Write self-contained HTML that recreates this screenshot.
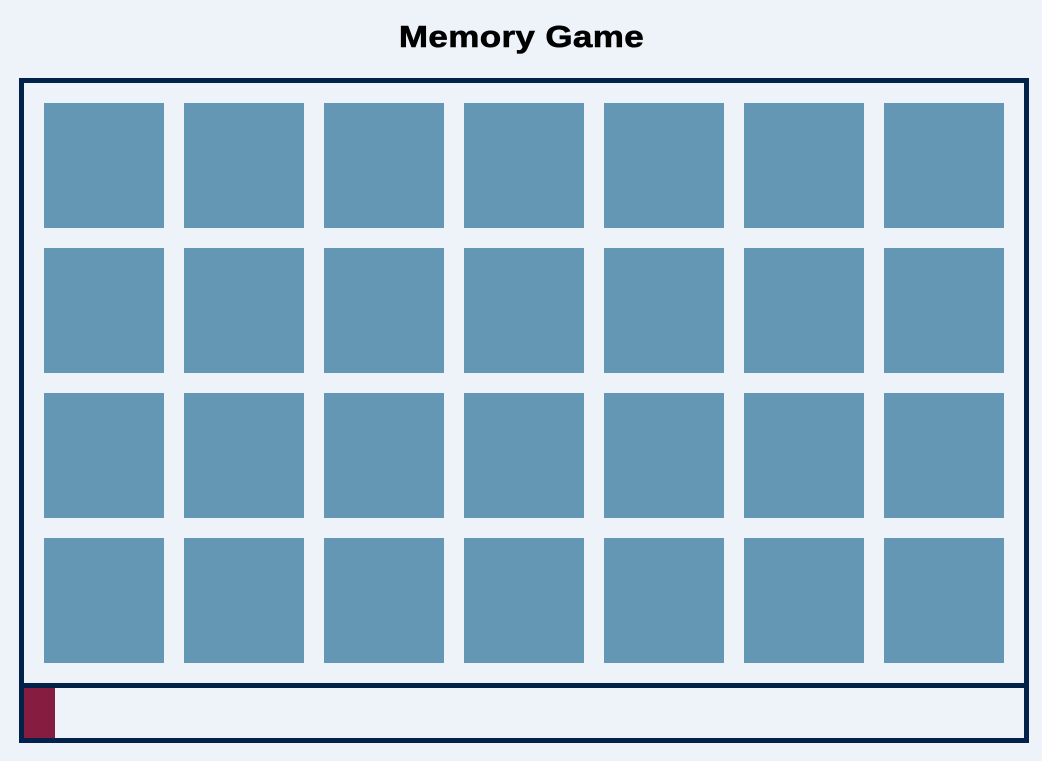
<!DOCTYPE html>
<html><head><style>
html,body{margin:0;padding:0;background:#eef2f9;width:1042px;height:761px;overflow:hidden}
h1{position:absolute;left:0;width:1042px;top:17px;margin:0;text-align:center;font:bold 31px/40px "Liberation Sans",sans-serif;color:#000}
h1 span{display:inline-block;transform:scaleX(1.13);letter-spacing:0.3px;-webkit-text-stroke:0.6px #000}
.board{position:absolute;left:19px;top:78px;width:1000px;height:600px;border:5px solid #02214b;border-bottom:none}
.card{position:absolute;width:120px;height:125px;background:#6497b4}
.bar{position:absolute;left:19px;top:683px;width:1000px;height:50px;border:5px solid #02214b}
.fill{position:absolute;left:0;top:0;width:31px;height:50px;background:#861c3f}
</style></head><body>
<h1><span>Memory Game</span></h1>
<div class="board">
<script>
for(let r=0;r<4;r++)for(let c=0;c<7;c++)document.write('<div class="card" style="left:'+(20+c*140)+'px;top:'+(20+r*145)+'px"></div>');
</script>
</div>
<div class="bar"><div class="fill"></div></div>
</body></html>
